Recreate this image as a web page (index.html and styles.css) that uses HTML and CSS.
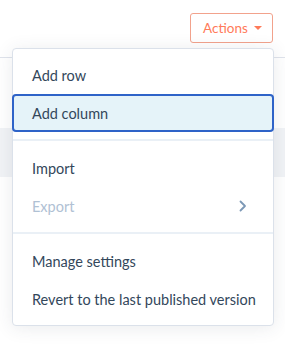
FILE: index.html
```html
<!DOCTYPE html>
<html>
<head>
<meta charset="utf-8">
<link rel="stylesheet" href="styles.css">
</head>
<body>
<div class="page">
  <div class="toolbar">
    <button class="actions-btn">Actions <span class="caret"></span></button>
  </div>
  <div class="table">
    <div class="table-head"></div>
    <div class="table-row"></div>
    <div class="table-row alt"></div>
  </div>
  <div class="menu">
    <div class="item">Add row</div>
    <div class="item active">Add column</div>
    <div class="divider"></div>
    <div class="item">Import</div>
    <div class="item disabled">Export
      <svg class="chev" width="8" height="12" viewBox="0 0 8 12"><path d="M1.5 1.5 L6 6 L1.5 10.5" fill="none" stroke="#7c98b6" stroke-width="1.8" stroke-linecap="round" stroke-linejoin="round"/></svg>
    </div>
    <div class="divider"></div>
    <div class="item">Manage settings</div>
    <div class="item">Revert to the last published version</div>
  </div>
</div>
</body>
</html>
```
FILE: styles.css
```css
* { box-sizing: border-box; }
html, body { margin: 0; padding: 0; background: #fff; }
body {
  font-family: "Lato", "Liberation Sans", sans-serif;
  color: #33475b;
  width: 285px;
  height: 345px;
  overflow: hidden;
}
.page { position: relative; height: 345px; }
.toolbar {
  display: flex;
  justify-content: flex-end;
  padding: 13px 12px 0 0;
}
.actions-btn {
  width: 83px;
  height: 30px;
  border: 1px solid #f2a28c;
  border-radius: 3px;
  background: #fff;
  color: #ff7a59;
  font-family: inherit;
  font-size: 13.5px;
  display: flex;
  align-items: center;
  justify-content: center;
  gap: 6px;
  padding: 0 0 0 2px;
}
.caret {
  width: 0; height: 0;
  border-left: 4px solid transparent;
  border-right: 4px solid transparent;
  border-top: 4px solid #ff7a59;
}
.table-head { height: 15px; border-bottom: 1px solid #dfe3eb; }
.table-row { height: 70px; }
.table-row.alt { height: 49px; background: #f1f3f6; }
.menu {
  position: absolute;
  top: 48px;
  left: 12px;
  width: 262px;
  background: #fff;
  border: 1px solid #dbe1ea;
  border-radius: 4px;
  padding: 7px 0 7px;
  box-shadow: 0 2px 18px rgba(45, 62, 80, 0.10);
}
.item {
  height: 38px;
  display: flex;
  align-items: center;
  justify-content: space-between;
  padding: 0 4px 0 17px;
  font-size: 14.5px;
  white-space: nowrap;
  border: 2px solid transparent;
  border-radius: 4px;
}
.item.active {
  background: #e5f3f9;
  border-color: #2e63c8;
  margin: 0 -1px;
  padding-left: 18px;
}
.item.disabled { color: #b0c1d4; }
.chev { display: block; margin-right: 20px; }
.divider { height: 2px; background: #eaf0f6; margin: 7px 0 8px; }
```
